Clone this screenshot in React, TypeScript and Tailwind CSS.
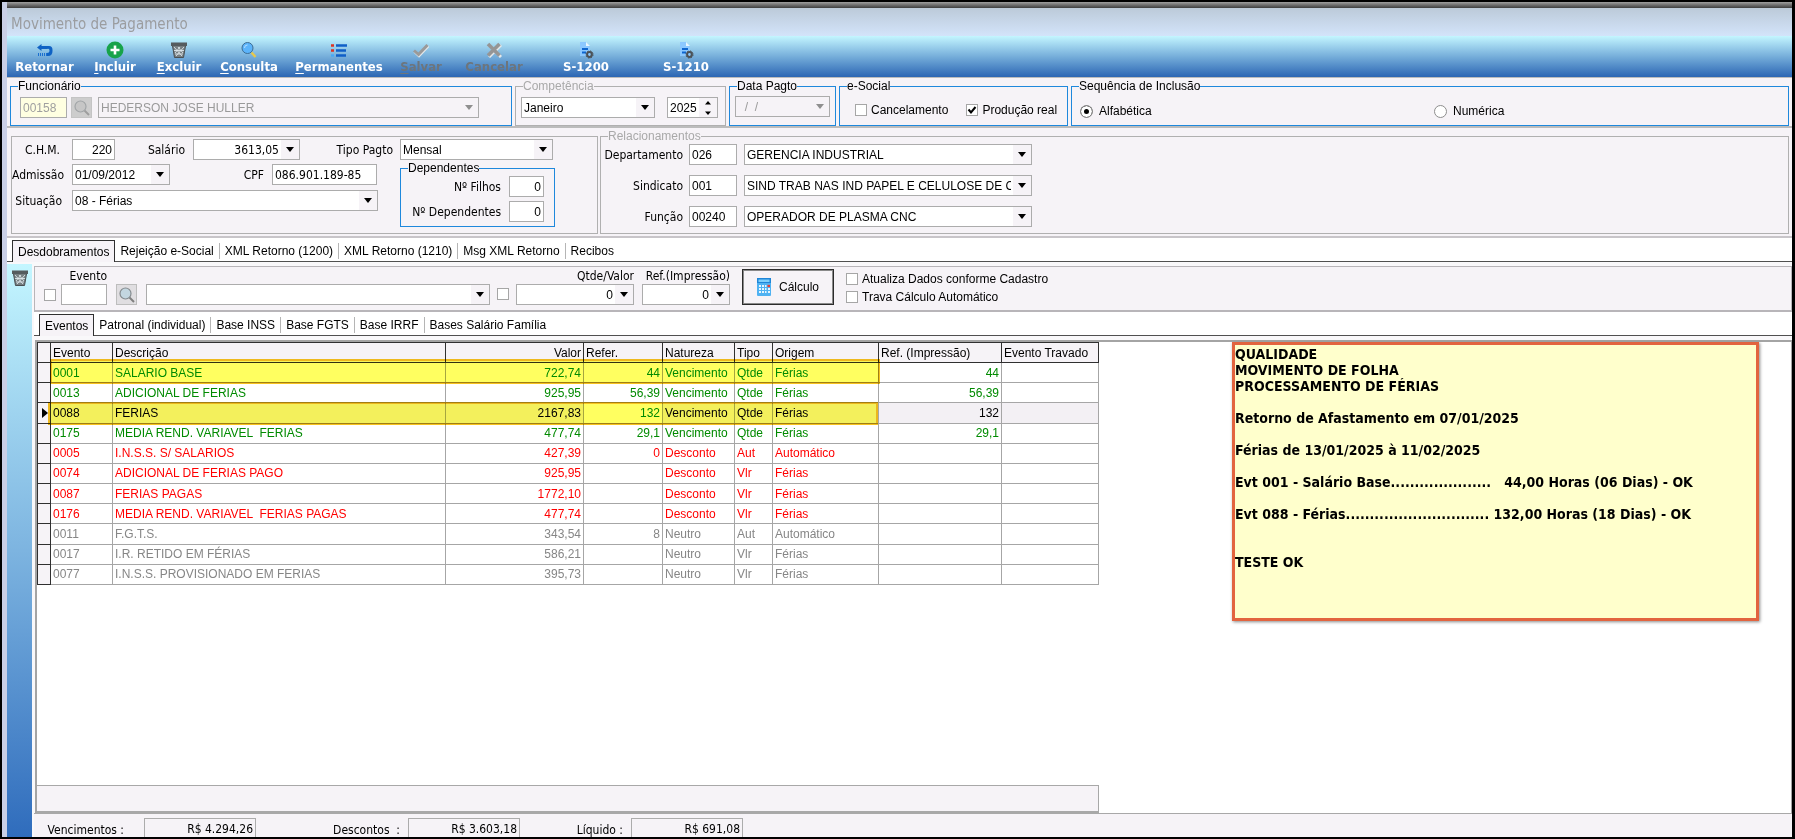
import type { ReactNode } from 'react';
import { clsx } from 'clsx';

type Tone = 'green' | 'red' | 'gray';

interface EventRow {
  code: string;
  description: string;
  value: string;
  ref: string;
  nature: string;
  type: string;
  origin: string;
  printRef: string;
  tone: Tone;
  selected?: boolean;
}

const rows: EventRow[] = [
  { code: '0001', description: 'SALARIO BASE', value: '722,74', ref: '44', nature: 'Vencimento', type: 'Qtde', origin: 'Férias', printRef: '44', tone: 'green' },
  { code: '0013', description: 'ADICIONAL DE FERIAS', value: '925,95', ref: '56,39', nature: 'Vencimento', type: 'Qtde', origin: 'Férias', printRef: '56,39', tone: 'green' },
  { code: '0088', description: 'FERIAS', value: '2167,83', ref: '132', nature: 'Vencimento', type: 'Qtde', origin: 'Férias', printRef: '132', tone: 'green', selected: true },
  { code: '0175', description: 'MEDIA REND. VARIAVEL  FERIAS', value: '477,74', ref: '29,1', nature: 'Vencimento', type: 'Qtde', origin: 'Férias', printRef: '29,1', tone: 'green' },
  { code: '0005', description: 'I.N.S.S. S/ SALARIOS', value: '427,39', ref: '0', nature: 'Desconto', type: 'Aut', origin: 'Automático', printRef: '', tone: 'red' },
  { code: '0074', description: 'ADICIONAL DE FERIAS PAGO', value: '925,95', ref: '', nature: 'Desconto', type: 'Vlr', origin: 'Férias', printRef: '', tone: 'red' },
  { code: '0087', description: 'FERIAS PAGAS', value: '1772,10', ref: '', nature: 'Desconto', type: 'Vlr', origin: 'Férias', printRef: '', tone: 'red' },
  { code: '0176', description: 'MEDIA REND. VARIAVEL  FERIAS PAGAS', value: '477,74', ref: '', nature: 'Desconto', type: 'Vlr', origin: 'Férias', printRef: '', tone: 'red' },
  { code: '0011', description: 'F.G.T.S.', value: '343,54', ref: '8', nature: 'Neutro', type: 'Aut', origin: 'Automático', printRef: '', tone: 'gray' },
  { code: '0017', description: 'I.R. RETIDO EM FÉRIAS', value: '586,21', ref: '', nature: 'Neutro', type: 'Vlr', origin: 'Férias', printRef: '', tone: 'gray' },
  { code: '0077', description: 'I.N.S.S. PROVISIONADO EM FERIAS', value: '395,73', ref: '', nature: 'Neutro', type: 'Vlr', origin: 'Férias', printRef: '', tone: 'gray' },
];

const toneClass: Record<Tone, string> = {
  green: 'text-[#008a00]',
  red: 'text-[#ff0000]',
  gray: 'text-[#868686]',
};

const mainTabs = ['Desdobramentos', 'Rejeição e-Social', 'XML Retorno (1200)', 'XML Retorno (1210)', 'Msg XML Retorno', 'Recibos'];
const eventTabs = ['Eventos', 'Patronal (individual)', 'Base INSS', 'Base FGTS', 'Base IRRF', 'Bases Salário Família'];

const noteText = `QUALIDADE
MOVIMENTO DE FOLHA
PROCESSAMENTO DE FÉRIAS

Retorno de Afastamento em 07/01/2025

Férias de 13/01/2025 à 11/02/2025

Evt 001 - Salário Base.....................   44,00 Horas (06 Dias) - OK

Evt 088 - Férias.............................. 132,00 Horas (18 Dias) - OK


TESTE OK`;

/* Icons */

const ReturnIcon = () => (
  <svg viewBox="0 0 16 16" className="size-4">
    <path d="M0 5.5 4.5 2v2H12q3.500 0 3.500 4v1q0 5-4.500 5h-1v-3q2.500 0 2.500-2.500T10 7H4.500v2z" fill="#0f62c4" />
    <path d="M1.500 11v3M3.500 11v3M5.500 11v3M7.500 11v3M9.500 11v3" stroke="#1b6fcf" strokeWidth="1" />
  </svg>
);

const AddIcon = () => (
  <svg viewBox="0 0 18 18" className="h-[18px] w-[18px]">
    <circle cx="9" cy="9" r="8.500" fill="#17a34a" />
    <path d="M9 4.500v9M4.500 9h9" stroke="#fff" strokeWidth="2.600" />
  </svg>
);

const TrashIcon = () => (
  <svg viewBox="0 0 16 16" className="size-4">
    <rect x="0" y="0.500" width="16" height="3.500" fill="#555b5e" />
    <path d="M1.500 4h13L12.500 15.500h-9z" fill="#777f82" />
    <path d="M3 5l8 9M7 5l5 6M13 5l-8 9M9 5l-5 6M3 8.500h10M4 12h8" stroke="#dfe8ec" strokeWidth="0.900" />
    <path d="M1.500 4 3.500 15.500h9L14.500 4" fill="none" stroke="#4a4f52" />
  </svg>
);

const SearchIcon = () => (
  <svg viewBox="0 0 16 16" className="size-4">
    <path d="M10.500 10.500 14.500 15" stroke="#e8c84a" strokeWidth="2.400" />
    <circle cx="6.500" cy="6" r="5.500" fill="#5cb4fb" stroke="#3d6d94" strokeWidth="1" />
    <path d="M3.500 6a3 3 0 0 1 3-3" stroke="#b6e0ff" fill="none" />
  </svg>
);

const GrayLens = ({ dim }: { dim?: boolean }) => (
  <svg viewBox="0 0 16 16" className={clsx('size-4', dim && 'opacity-60')}>
    <path d="M10.500 10.500 15 15" stroke="#808080" strokeWidth="2" />
    <circle cx="6.500" cy="6.500" r="5.500" fill={dim ? '#c2c2c2' : '#c3d6e0'} stroke="#858b8f" strokeWidth="1.200" />
  </svg>
);

const ListIcon = () => (
  <svg viewBox="0 0 16 16" className="size-4">
    <path d="M0 3.500h3M0 8.500h3" stroke="#dd3322" strokeWidth="2.600" />
    <path d="M0 13.500h3" stroke="#48a8f5" strokeWidth="2.400" />
    <path d="M5 3.500h11M5 8.500h10M5 13.500h10" stroke="#0f5fc8" strokeWidth="2.400" />
  </svg>
);

const CheckIcon = () => (
  <svg viewBox="0 0 16 16" className="size-4">
    <path d="M1.500 9.500 6 14 15.500 4" stroke="#e4e8ea" strokeWidth="2.600" fill="none" />
    <path d="M1 8.500 5.500 12.500 14.500 3" stroke="#9a9a9a" strokeWidth="3" fill="none" />
  </svg>
);

const CancelIcon = () => (
  <svg viewBox="0 0 16 16" className="size-4">
    <path d="M3 3l12 12M15 3 3 15" stroke="#e4e8ea" strokeWidth="3" />
    <path d="M2 2l11.500 11.500M13.500 2 2 13.500" stroke="#959595" strokeWidth="3.600" />
  </svg>
);

const DocGearIcon = () => (
  <svg viewBox="0 0 16 18" className="h-[18px] w-4">
    <path d="M2 1h6l4 4v10H2z" fill="#8cc8ff" />
    <path d="M8 1v4h4z" fill="#e9f6ff" />
    <path d="M4 8h6M4 11.500h4" stroke="#0f66d0" strokeWidth="1.800" />
    <circle cx="11.500" cy="13.500" r="2.400" fill="none" stroke="#4c5258" strokeWidth="2" />
    <circle cx="11.500" cy="13.500" r="3.600" fill="none" stroke="#4c5258" strokeWidth="1" strokeDasharray="1.400 1.430" />
  </svg>
);

const CalculatorIcon = () => (
  <svg viewBox="0 0 14 18" className="h-[18px] w-3.5">
    <rect width="14" height="18" rx="1" fill="#4fb2f2" />
    <rect x="0" y="0" width="14" height="5" fill="#1f86d8" />
    <rect x="1.500" y="1.500" width="11" height="2.500" fill="#7fd0fb" />
    <path d="M2 8h2M5 8h2M8 8h1.500M2 11h2M5 11h2M8 11h1.500M2 14h2M5 14h2M8 14h1.500M11 11h2M11 14h2" stroke="#e6f6ff" strokeWidth="2" />
    <path d="M10.500 8h2.500" stroke="#ee3b2f" strokeWidth="2.200" />
  </svg>
);

const Arrow = ({ dim }: { dim?: boolean }) => (
  <svg viewBox="0 0 8 5" className="h-[5px] w-2" fill={dim ? '#8f8f8f' : '#000'}>
    <path d="M0 0h8L4 5z" />
  </svg>
);

/* Form controls */

const boxBorder = 'border border-[#acacac]';

interface FieldProps {
  id?: string;
  label?: string;
  value?: string;
  className?: string;
  disabled?: boolean;
  align?: 'left' | 'right';
}

function TextField({ id, label, value = '', className, disabled, align = 'left' }: FieldProps) {
  return (
    <input
      id={id}
      aria-label={label}
      defaultValue={value}
      disabled={disabled}
      className={clsx('h-[21px] min-w-0 px-0.5 outline-none', boxBorder, align === 'right' && 'text-right', className)}
    />
  );
}

function SelectField({ id, label, value = '', className, disabled }: FieldProps) {
  return (
    <span className={clsx('relative flex h-[21px]', boxBorder, disabled ? 'bg-[#f6f3f7] text-[#9a9a9a]' : 'bg-white', className)}>
      <select id={id} aria-label={label} disabled={disabled} defaultValue={value} className="w-full appearance-none overflow-hidden pr-5 pl-0.5 outline-none">
        <option value={value}>{value}</option>
      </select>
      <span className="pointer-events-none absolute inset-y-0 right-0 flex w-[18px] items-center justify-center bg-[#f6f3f7]">
        <Arrow dim={disabled} />
      </span>
    </span>
  );
}

function DropField({ id, label, value = '', className, disabled, align = 'left' }: FieldProps) {
  return (
    <span className={clsx('flex h-[21px]', boxBorder, disabled ? 'bg-[#f6f3f7] text-[#9a9a9a]' : 'bg-white', className)}>
      <input
        id={id}
        aria-label={label}
        defaultValue={value}
        disabled={disabled}
        className={clsx('w-full min-w-0 px-0.5 outline-none', align === 'right' && 'text-right')}
      />
      <button type="button" aria-label="Abrir" disabled={disabled} className="flex w-[18px] shrink-0 items-center justify-center bg-[#f6f3f7]">
        <Arrow dim={disabled} />
      </button>
    </span>
  );
}

function Check({ label, checked, name, className }: { label?: string; checked?: boolean; name?: string; className?: string }) {
  return (
    <label className={clsx('flex items-center gap-1 whitespace-nowrap', className)}>
      <span className="relative flex size-3">
        <input type="checkbox" aria-label={name} defaultChecked={checked} className="peer size-3 appearance-none border border-[#a6a6a6] bg-white" />
        <svg viewBox="0 0 12 12" className="pointer-events-none absolute inset-0 hidden size-3 peer-checked:block">
          <path d="M2.500 5.500 5 8.500 9.500 3" stroke="#000" strokeWidth="2" fill="none" />
        </svg>
      </span>
      {label}
    </label>
  );
}

function Radio({ label, checked }: { label: string; checked?: boolean }) {
  return (
    <label className="flex items-center gap-1.5">
      <input
        type="radio"
        name="sequencia"
        defaultChecked={checked}
        className="size-[13px] appearance-none rounded-full border border-[#8e8e8e] bg-white checked:bg-black checked:shadow-[inset_0_0_0_3px_#fff]"
      />
      {label}
    </label>
  );
}

function Group({ title, className, muted, children }: { title: string; className?: string; muted?: boolean; children: ReactNode }) {
  return (
    <fieldset className={clsx('min-w-0 border', muted ? 'border-[#b0b0b0]' : 'border-[#1e88dc]', className)}>
      <legend className={clsx('ml-[7px] leading-4', muted && 'text-[#a9a9a9]')}>{title}</legend>
      {children}
    </fieldset>
  );
}

function ToolButton({ icon, hotkey, label, className, disabled }: { icon: ReactNode; hotkey?: string; label: string; className: string; disabled?: boolean }) {
  return (
    <button
      type="button"
      disabled={disabled}
      className={clsx('flex flex-col items-center whitespace-nowrap', disabled ? 'text-[#6d757c]' : 'text-white', className)}
    >
      <span className="flex h-[18px] items-center">{icon}</span>
      <span className="leading-4">
        {hotkey && <u className="underline-offset-2">{hotkey}</u>}
        {label}
      </span>
    </button>
  );
}

function TabStrip({ tabs, className }: { tabs: string[]; className?: string }) {
  return (
    <div role="tablist" className={clsx('flex border-b border-[#505050] bg-white', className)}>
      {tabs.map((tab, i) => (
        <button
          key={tab}
          type="button"
          role="tab"
          aria-selected={i === 0}
          className={clsx(
            'flex items-center whitespace-nowrap',
            i === 0 && '-mb-px border-x border-t border-[#303030] bg-[#f6f3f7] px-[5px]',
          )}
        >
          {i > 0 && (
            <span className={clsx('flex h-4 items-center px-[5px]', i < tabs.length - 1 && 'border-r border-[#b5b5b5]')}>{tab}</span>
          )}
          {i === 0 && tab}
        </button>
      ))}
    </div>
  );
}

/* Sections */

function Toolbar() {
  return (
    <div className="flex h-[41px] items-start bg-linear-to-b from-[#c4f6ff] via-[#76aeda] to-[#2c66b3] pt-[5px] font-['DejaVu_Sans_Condensed','DejaVu_Sans',sans-serif] text-[13px] font-bold">
      <ToolButton className="w-[75px]" icon={<ReturnIcon />} label="Retornar" />
      <ToolButton className="w-[66px]" icon={<AddIcon />} hotkey="I" label="ncluir" />
      <ToolButton className="w-[62px]" icon={<TrashIcon />} hotkey="E" label="xcluir" />
      <ToolButton className="w-[78px]" icon={<SearchIcon />} hotkey="C" label="onsulta" />
      <ToolButton className="w-[102px]" icon={<ListIcon />} hotkey="P" label="ermanentes" />
      <ToolButton className="w-[62px]" icon={<CheckIcon />} hotkey="S" label="alvar" disabled />
      <ToolButton className="w-[84px]" icon={<CancelIcon />} label="Cancelar" disabled />
      <ToolButton className="w-[100px]" icon={<DocGearIcon />} label="S-1200" />
      <ToolButton className="w-[100px]" icon={<DocGearIcon />} label="S-1210" />
    </div>
  );
}

function HeaderGroups() {
  return (
    <div className="flex gap-[3px] border-t border-b-2 border-[#bcbcbc] bg-[#f6f3f7] px-[3px]">
      <Group title="Funcionário" className="w-[502px]">
        <div className="flex gap-1 px-[9px] pt-[3px] pb-[7px]">
          <TextField label="Código" value="00158" disabled className="w-[47px] bg-[#ffffe1] text-[#a0a0a0]" />
          <button type="button" aria-label="Pesquisar funcionário" className="flex h-[21px] w-[21px] items-center justify-center border border-[#c4c4c4] bg-[#cdcdcd]">
            <GrayLens dim />
          </button>
          <SelectField label="Funcionário" value="HEDERSON JOSE HULLER" disabled className="ml-0.5 w-[381px]" />
        </div>
      </Group>
      <Group title="Competência" muted className="w-[211px]">
        <div className="flex gap-3 px-[5px] pt-[3px] pb-[7px]">
          <SelectField label="Mês" value="Janeiro" className="w-[134px]" />
          <span className={clsx('flex h-[21px] w-[51px] bg-white', boxBorder)}>
            <input aria-label="Ano" defaultValue="2025" className="w-full min-w-0 pl-0.5 outline-none" />
            <button type="button" aria-label="Alterar ano" className="flex w-[18px] shrink-0 items-center justify-center bg-[#f6f3f7]">
              <svg viewBox="0 0 6 14" className="h-3.5 w-1.5">
                <path d="M0 3.500h6L3 0zM0 10.500h6L3 14z" />
              </svg>
            </button>
          </span>
        </div>
      </Group>
      <Group title="Data Pagto" className="w-[107px]">
        <div className="flex px-[5px] pt-0.5 pb-2">
          <DropField label="Data Pagto" value="  /  /" disabled className="w-full" />
        </div>
      </Group>
      <Group title="e-Social" className="w-[229px]">
        <div className="flex h-[31px] items-center gap-[18px] pl-[15px]">
          <Check label="Cancelamento" />
          <Check label="Produção real" checked />
        </div>
      </Group>
      <Group title="Sequência de Inclusão" className="flex-1">
        <div className="grid h-[31px] grid-cols-2 items-center pt-[3px] pl-2">
          <Radio label="Alfabética" checked />
          <Radio label="Numérica" />
        </div>
      </Group>
    </div>
  );
}

const labelFont = "font-['DejaVu_Sans_Condensed','DejaVu_Sans',sans-serif]";

function Label({ htmlFor, className, children }: { htmlFor: string; className?: string; children: ReactNode }) {
  return (
    <label htmlFor={htmlFor} className={clsx('shrink-0 text-right whitespace-nowrap', labelFont, className)}>
      {children}
    </label>
  );
}

function EmployeeDetails() {
  return (
    <div className="flex gap-0.5 border-b-2 border-[#c8c5c9] bg-[#f6f3f7] pr-[3px] pb-0.5 pl-1">
      <div className="mt-2 w-[587px] border border-[#b0b0b0] pt-0.5">
        <div className="flex items-center">
          <Label htmlFor="chm" className="w-[52px] pr-1">C.H.M.</Label>
          <TextField id="chm" value="220" align="right" className="ml-2 w-[43px] bg-white" />
          <Label htmlFor="salario" className="w-[70px]">Salário</Label>
          <DropField id="salario" value="3613,05" align="right" className={clsx('ml-2 w-[107px]', labelFont)} />
          <Label htmlFor="tipo" className="w-[93px]">Tipo Pagto</Label>
          <SelectField id="tipo" value="Mensal" className="ml-[7px] w-[153px]" />
        </div>
        <div className="flex">
          <div className="mt-1 flex flex-col gap-[5px]">
            <div className="flex items-center">
              <Label htmlFor="admissao" className="w-[52px]">Admissão</Label>
              <DropField id="admissao" value="01/09/2012" className="ml-2 w-[98px]" />
              <Label htmlFor="cpf" className="w-[94px]">CPF</Label>
              <TextField id="cpf" value="086.901.189-85" className={clsx('ml-2 w-[105px] bg-white', labelFont)} />
            </div>
            <div className="flex items-center">
              <Label htmlFor="situacao" className="w-[52px] pr-0.5">Situação</Label>
              <SelectField id="situacao" value="08 - Férias" className="ml-2 w-[306px]" />
            </div>
          </div>
          <Group title="Dependentes" className="ml-[22px] w-[155px]">
            <div className="flex flex-col gap-1 pr-2.5 pb-1">
              <div className="flex items-center justify-end gap-2">
                <Label htmlFor="filhos">Nº Filhos</Label>
                <TextField id="filhos" value="0" align="right" className="w-[35px] bg-white" />
              </div>
              <div className="flex items-center justify-end gap-2">
                <Label htmlFor="dependentes">Nº Dependentes</Label>
                <TextField id="dependentes" value="0" align="right" className="w-[35px] bg-white" />
              </div>
            </div>
          </Group>
        </div>
      </div>
      <Group title="Relacionamentos" muted className="flex-1">
        <div className="flex flex-col gap-2.5 pb-1.5">
          {[
            { id: 'departamento', label: 'Departamento', code: '026', name: 'GERENCIA INDUSTRIAL' },
            { id: 'sindicato', label: 'Sindicato', code: '001', name: 'SIND TRAB NAS IND PAPEL E CELULOSE DE C' },
            { id: 'funcao', label: 'Função', code: '00240', name: 'OPERADOR DE PLASMA CNC' },
          ].map((item) => (
            <div key={item.id} className="flex items-center">
              <Label htmlFor={item.id} className="w-[82px]">{item.label}</Label>
              <TextField id={item.id} value={item.code} className="ml-1.5 w-12 bg-white" />
              <SelectField label={item.label} value={item.name} className="ml-[7px] w-[288px]" />
            </div>
          ))}
        </div>
      </Group>
    </div>
  );
}

function EventEntry() {
  return (
    <div className="flex h-[46px] items-end border border-b-2 border-[#b8b5b9] bg-[#f6f3f7] pb-[5px] pl-[9px]">
      <Check name="Marcar evento" className="mb-1" />
      <div className="ml-[5px] flex w-[46px] flex-col">
        <Label htmlFor="evento" className="text-left leading-4">Evento</Label>
        <TextField id="evento" className="w-full bg-white" />
      </div>
      <button type="button" aria-label="Pesquisar evento" className="ml-[9px] flex h-[21px] w-[21px] items-center justify-center border border-[#bdbdbd] bg-[#e0dee1]">
        <GrayLens />
      </button>
      <SelectField label="Descrição do evento" className="ml-[9px] w-[344px]" />
      <Check name="Manter valor" className="mb-[5px] ml-[7px]" />
      <div className="ml-[7px] flex w-[118px] flex-col">
        <Label htmlFor="qtde" className="leading-4">Qtde/Valor</Label>
        <DropField id="qtde" value="0" align="right" className="w-full" />
      </div>
      <div className="ml-2 flex w-[88px] flex-col">
        <Label htmlFor="refimp" className="leading-4">Ref.(Impressão)</Label>
        <DropField id="refimp" value="0" align="right" className="w-full" />
      </div>
      <button type="button" className="ml-3 flex h-[36px] w-[92px] items-center justify-center gap-2 border border-[#2b2b2b] bg-[#f6f3f7] outline outline-[#8a8a8a] -outline-offset-2">
        <CalculatorIcon />
        Cálculo
      </button>
      <div className="ml-3 flex flex-col gap-0.5">
        <Check label="Atualiza Dados conforme Cadastro" />
        <Check label="Trava Cálculo Automático" />
      </div>
    </div>
  );
}

const headCell = 'border-r border-b border-[#303030] bg-[#f6f3f7] px-0.5 text-left font-normal';
const cell = 'border-r border-b border-[#a6a6a6] px-0.5 whitespace-pre';

function EventTable() {
  return (
    <div className="relative">
      <table className="h-[243px] w-[1062px] table-fixed border-separate border-spacing-0 border-t border-l border-[#303030] leading-4">
        <colgroup>
          <col className="w-[13px]" />
          <col className="w-[62px]" />
          <col className="w-[333px]" />
          <col className="w-[138px]" />
          <col className="w-[79px]" />
          <col className="w-[72px]" />
          <col className="w-[38px]" />
          <col className="w-[106px]" />
          <col className="w-[123px]" />
          <col />
        </colgroup>
        <thead>
          <tr className="h-5">
            <th className={headCell} />
            <th className={headCell}>Evento</th>
            <th className={headCell}>Descrição</th>
            <th className="border-r border-b border-[#303030] bg-[#f6f3f7] px-0.5 text-right font-normal">Valor</th>
            <th className={headCell}>Refer.</th>
            <th className={headCell}>Natureza</th>
            <th className={headCell}>Tipo</th>
            <th className={headCell}>Origem</th>
            <th className={headCell}>Ref. (Impressão)</th>
            <th className={headCell}>Evento Travado</th>
          </tr>
        </thead>
        <tbody>
          {rows.map((row) => (
            <tr key={row.code} className={clsx('h-5', row.selected ? 'bg-[#f3f0f4] text-black' : toneClass[row.tone])}>
              <td className="border-r border-b border-[#303030] bg-[#f6f3f7] p-0">
                {row.selected && (
                  <svg viewBox="0 0 6 10" className="ml-1 h-2.5 w-1.5" fill="#000">
                    <path d="M0 0v10l6-5z" />
                  </svg>
                )}
              </td>
              <td className={cell}>{row.code}</td>
              <td className={cell}>{row.description}</td>
              <td className={clsx(cell, 'text-right')}>{row.value}</td>
              <td className={clsx(cell, 'bg-white text-right', toneClass[row.tone])}>{row.ref}</td>
              <td className={cell}>{row.nature}</td>
              <td className={cell}>{row.type}</td>
              <td className={cell}>{row.origin}</td>
              <td className={clsx(cell, 'text-right')}>{row.printRef}</td>
              <td className={cell} />
            </tr>
          ))}
        </tbody>
      </table>
      {/* Marker strokes over the checked events */}
      <div className="pointer-events-none absolute top-[17px] left-[13px] h-[25px] w-[830px] border-2 border-[#f7c21e] bg-[#ffff60] mix-blend-multiply" />
      <div className="pointer-events-none absolute top-[60px] left-[11px] h-[23px] w-[830px] border-2 border-[#f7c21e] bg-[#ffff60] mix-blend-multiply" />
    </div>
  );
}

function Totals() {
  return (
    <div className={clsx('flex h-6 shrink-0 items-start overflow-hidden border-t border-[#a8a8a8] bg-[#f6f3f7] pt-1', labelFont)}>
      {[
        { id: 'vencimentos', label: 'Vencimentos :', value: 'R$ 4.294,26', width: 'w-[90px]', gap: 'ml-[20px]' },
        { id: 'descontos', label: 'Descontos  :', value: 'R$ 3.603,18', width: 'w-[144px]', gap: 'ml-2' },
        { id: 'liquido', label: 'Líquido :', value: 'R$ 691,08', width: 'w-[103px]', gap: 'ml-2' },
      ].map((total) => (
        <div key={total.id} className="flex items-start">
          <label htmlFor={total.id} className={clsx('pt-1 text-right whitespace-pre', total.width)}>{total.label}</label>
          <input
            id={total.id}
            readOnly
            defaultValue={total.value}
            className={clsx('h-[21px] w-[112px] border border-[#acacac] px-0.5 text-right outline-none', total.gap)}
          />
        </div>
      ))}
    </div>
  );
}

export default function App() {
  return (
    <div className="flex h-screen overflow-hidden border-2 border-r-[3px] border-black bg-[#c9cfe6] pl-[5px] font-['Liberation_Sans',Arial,sans-serif] text-[12px] leading-4 text-black">
      <div className="flex min-w-0 flex-1 flex-col">
        <div className="h-1.5 shrink-0 bg-linear-to-b from-[#a0a0a0] to-[#404040]" />
        <header className={clsx('flex h-7 shrink-0 items-center bg-linear-to-b from-[#bccad9] to-[#d3e4fa] pt-1 pl-1 text-[15px] text-[#9b9da0]', labelFont)}>
          <h1>Movimento de Pagamento</h1>
        </header>
        <Toolbar />
        <HeaderGroups />
        <EmployeeDetails />
        <TabStrip tabs={mainTabs} className="h-6 shrink-0 pt-0.5 pl-[5px]" />
        <div className="flex min-h-0 flex-1 bg-[#f9f8fa] pt-0.5">
          <aside className="flex w-[25px] shrink-0 flex-col items-center bg-linear-to-b from-[#c4f6ff] via-[#7db4e0] to-[#2f6cbc] pt-1.5">
            <button type="button" aria-label="Excluir evento">
              <TrashIcon />
            </button>
          </aside>
          <div className="flex min-w-0 flex-1 flex-col pt-0.5 pl-0.5">
            <EventEntry />
            <TabStrip tabs={eventTabs} className="h-6 shrink-0 pt-0.5 pl-[5px]" />
            <div className="mt-1 ml-px flex min-h-0 flex-1 flex-col border-t-2 border-r border-l-2 border-[#a4a4a4] bg-white">
              <div className="flex min-h-0 flex-1 items-start justify-between">
                <EventTable />
                <div className="mr-8 h-[279px] w-[527px] border-[3px] border-[#e2643f] bg-[#ffffcc] pt-px font-['DejaVu_Sans_Condensed','DejaVu_Sans',sans-serif] text-[14px] leading-4 font-bold whitespace-pre shadow-[1px_1px_3px_#888]">
                  {noteText}
                </div>
              </div>
              <div className="h-7 w-[1062px] shrink-0 border-t border-r border-b-2 border-[#a8a8a8] bg-[#f6f3f7]" />
            </div>
            <Totals />
          </div>
        </div>
      </div>
    </div>
  );
}
